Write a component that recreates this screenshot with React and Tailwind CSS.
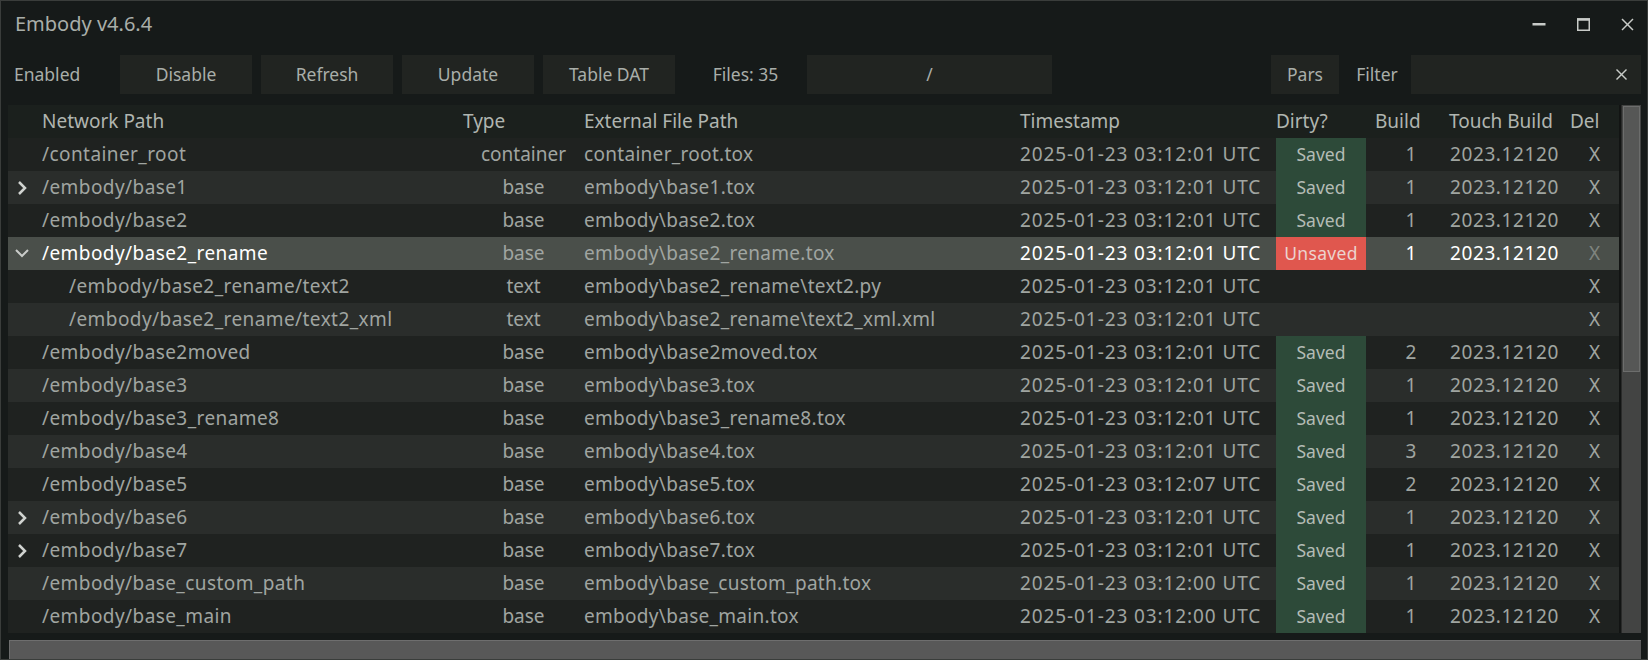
import React from 'react';

const rows = [
  { path: '/container_root', type: 'container', ext: 'container_root.tox', ts: '2025-01-23 03:12:01 UTC', dirty: 'Saved', build: '1', touch: '2023.12120' },
  { path: '/embody/base1', chev: 'right', type: 'base', ext: 'embody\\base1.tox', ts: '2025-01-23 03:12:01 UTC', dirty: 'Saved', build: '1', touch: '2023.12120' },
  { path: '/embody/base2', type: 'base', ext: 'embody\\base2.tox', ts: '2025-01-23 03:12:01 UTC', dirty: 'Saved', build: '1', touch: '2023.12120' },
  { path: '/embody/base2_rename', chev: 'down', active: true, type: 'base', ext: 'embody\\base2_rename.tox', ts: '2025-01-23 03:12:01 UTC', dirty: 'Unsaved', build: '1', touch: '2023.12120' },
  { path: '/embody/base2_rename/text2', child: true, type: 'text', ext: 'embody\\base2_rename\\text2.py', ts: '2025-01-23 03:12:01 UTC' },
  { path: '/embody/base2_rename/text2_xml', child: true, type: 'text', ext: 'embody\\base2_rename\\text2_xml.xml', ts: '2025-01-23 03:12:01 UTC' },
  { path: '/embody/base2moved', type: 'base', ext: 'embody\\base2moved.tox', ts: '2025-01-23 03:12:01 UTC', dirty: 'Saved', build: '2', touch: '2023.12120' },
  { path: '/embody/base3', type: 'base', ext: 'embody\\base3.tox', ts: '2025-01-23 03:12:01 UTC', dirty: 'Saved', build: '1', touch: '2023.12120' },
  { path: '/embody/base3_rename8', type: 'base', ext: 'embody\\base3_rename8.tox', ts: '2025-01-23 03:12:01 UTC', dirty: 'Saved', build: '1', touch: '2023.12120' },
  { path: '/embody/base4', type: 'base', ext: 'embody\\base4.tox', ts: '2025-01-23 03:12:01 UTC', dirty: 'Saved', build: '3', touch: '2023.12120' },
  { path: '/embody/base5', type: 'base', ext: 'embody\\base5.tox', ts: '2025-01-23 03:12:07 UTC', dirty: 'Saved', build: '2', touch: '2023.12120' },
  { path: '/embody/base6', chev: 'right', type: 'base', ext: 'embody\\base6.tox', ts: '2025-01-23 03:12:01 UTC', dirty: 'Saved', build: '1', touch: '2023.12120' },
  { path: '/embody/base7', chev: 'right', type: 'base', ext: 'embody\\base7.tox', ts: '2025-01-23 03:12:01 UTC', dirty: 'Saved', build: '1', touch: '2023.12120' },
  { path: '/embody/base_custom_path', type: 'base', ext: 'embody\\base_custom_path.tox', ts: '2025-01-23 03:12:00 UTC', dirty: 'Saved', build: '1', touch: '2023.12120' },
  { path: '/embody/base_main', type: 'base', ext: 'embody\\base_main.tox', ts: '2025-01-23 03:12:00 UTC', dirty: 'Saved', build: '1', touch: '2023.12120' },
];

function Chevron({ dir }) {
  if (dir === 'down') {
    return (
      <svg width="14" height="9" viewBox="0 0 14 9" fill="none" stroke="#c9ccc9" strokeWidth="2">
        <polyline points="1,1 7,7 13,1" />
      </svg>
    );
  }
  return (
    <svg width="10" height="14" viewBox="0 0 10 14" fill="none" stroke="#d0d3d0" strokeWidth="2.5">
      <polyline points="2,1 8,7 2,13" />
    </svg>
  );
}

function ToolButton({ children, className = 'w-[132px]' }) {
  return (
    <div className={`${className} h-full bg-[#212421] flex items-center justify-center text-[#a9aea9]`}>
      {children}
    </div>
  );
}

function Row({ row, index }) {
  const bg = row.active ? 'bg-[#4a4f4a]' : index % 2 === 0 ? 'bg-[#1f2220]' : 'bg-[#2a2d2b]';
  const hi = row.active ? 'text-white' : 'text-[#a0a5a1]';
  return (
    <div className={`flex h-[33px] items-center text-[19px] text-[#a0a5a1] ${bg}`}>
      <div className="w-[455px] flex items-center h-full">
        <div className="w-[34px] flex justify-center pr-[7px]">
          {row.chev && <Chevron dir={row.chev} />}
        </div>
        <span className={`tracking-[0.42px] ${row.child ? 'pl-[27px]' : ''} ${hi}`}>{row.path}</span>
      </div>
      <div className="w-[121px] text-center">{row.type}</div>
      <div className="w-[436px] tracking-[0.3px]">{row.ext}</div>
      <div className={`w-[256px] tracking-[0.9px] ${hi}`}>{row.ts}</div>
      <div
        className={`w-[90px] h-full flex items-center justify-center text-[17.5px] ${
          row.dirty === 'Saved' ? 'bg-[#2d4a39] text-[#b4bcb5]' : row.dirty === 'Unsaved' ? 'bg-[#e0574e] text-[#ecd3ce] tracking-[0.3px]' : ''
        }`}
      >
        {row.dirty}
      </div>
      <div className={`w-[83px] pl-[7px] text-center ${hi}`}>{row.build}</div>
      <div className={`w-[121px] pl-[1px] tracking-[0.6px] ${hi}`}>{row.touch}</div>
      <div className={`w-[49px] text-center ${row.active ? 'text-[#7f847f]' : ''}`}>X</div>
    </div>
  );
}

export default function App() {
  return (
    <div className="w-[1648px] h-[660px] bg-[#161a19] border border-[#3a3d3b] flex flex-col overflow-hidden font-['Noto_Sans',sans-serif] text-[17.5px] text-[#a9aea9]">
      {/* title bar */}
      <div className="h-[46px] flex items-center pl-[14px] pr-[13px] shrink-0">
        <span className="text-[20px] text-[#a9aea9]">Embody v4.6.4</span>
        <div className="ml-auto flex items-center gap-[31px]">
          <svg width="14" height="14" viewBox="0 0 14 14">
            <rect x="0.5" y="6" width="13" height="2.5" fill="#c8cbc8" />
          </svg>
          <svg width="13" height="13" viewBox="0 0 13 13" fill="none" stroke="#c8cbc8">
            <rect x="0.75" y="1" width="11.5" height="11.25" strokeWidth="1.5" />
            <line x1="0" y1="1.5" x2="13" y2="1.5" strokeWidth="2.5" />
          </svg>
          <svg width="13" height="13" viewBox="0 0 13 13" fill="none" stroke="#c8cbc8" strokeWidth="1.5">
            <line x1="1" y1="1" x2="12" y2="12" />
            <line x1="12" y1="1" x2="1" y2="12" />
          </svg>
        </div>
      </div>

      {/* toolbar */}
      <div className="mt-[8px] h-[39px] flex items-center shrink-0">
        <div className="w-[119px] pl-[13px]">Enabled</div>
        <div className="flex h-full gap-[9px]">
          <ToolButton>Disable</ToolButton>
          <ToolButton>Refresh</ToolButton>
          <ToolButton>Update</ToolButton>
          <ToolButton>Table DAT</ToolButton>
        </div>
        <div className="w-[132px] pl-[9px] text-center">Files: 35</div>
        <div className="w-[245px] h-full bg-[#212421] flex items-center justify-center">/</div>
        <div className="flex-1" />
        <ToolButton className="w-[68px]">Pars</ToolButton>
        <div className="w-[72px] text-center pl-[4px]">Filter</div>
        <div className="w-[230px] h-full bg-[#212421] flex items-center justify-end pr-[14px]">
          <svg width="11" height="11" viewBox="0 0 11 11" fill="none" stroke="#c8cbc8" strokeWidth="1.4">
            <line x1="0.5" y1="0.5" x2="10.5" y2="10.5" />
            <line x1="10.5" y1="0.5" x2="0.5" y2="10.5" />
          </svg>
        </div>
        <div className="w-[6px]" />
      </div>

      {/* table */}
      <div className="mt-[11px] flex shrink-0 pl-[7px]">
        <div className="w-[1611px]">
          <div className="flex h-[33px] items-center bg-[#1b201d] text-[19px] text-[#b0b5b0]">
            <div className="w-[455px] pl-[34px]">Network Path</div>
            <div className="w-[121px]">Type</div>
            <div className="w-[436px]">External File Path</div>
            <div className="w-[256px]">Timestamp</div>
            <div className="w-[90px]">Dirty?</div>
            <div className="w-[83px] pl-[9px]">Build</div>
            <div className="w-[121px]">Touch Build</div>
            <div className="w-[49px]">Del</div>
          </div>
          {rows.map((row, i) => (
            <Row key={row.path} row={row} index={i} />
          ))}
        </div>
        <div className="w-[2px] bg-[#121413]" />
        <div className="w-[20px] bg-[#434443] flex flex-col pt-[1px] px-[1px] border-l border-[#2a2b2a]">
          <div className="h-[266px] bg-[#565756] border border-[#6c6d6c]" />
        </div>
      </div>

      {/* horizontal scrollbar */}
      <div className="mt-[7px] ml-[8px] mr-[6px] h-[19px] bg-[#585858] border-t border-l border-[#6e6e6e]" />
    </div>
  );
}
